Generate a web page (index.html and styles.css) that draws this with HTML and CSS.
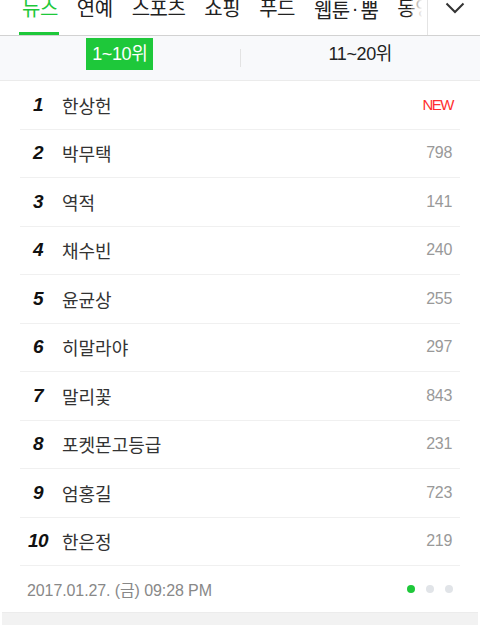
FILE: index.html
```html
<!DOCTYPE html>
<html lang="ko">
<head>
<meta charset="utf-8">
<title>실시간 급상승 검색어</title>
<link rel="stylesheet" href="styles.css">
</head>
<body>
<div class="nav">
  <div class="nav-scroll">
    <span class="nav-item active">뉴스</span>
    <span class="nav-item">연예</span>
    <span class="nav-item">스포츠</span>
    <span class="nav-item">쇼핑</span>
    <span class="nav-item">푸드</span>
    <span class="nav-item">웹툰<span class="mid">·</span>뿜</span>
    <span class="nav-item">동영상</span>
    <div class="nav-fade"></div>
  </div>
  <div class="nav-more">
    <svg width="20" height="12" viewBox="0 0 20 12"><path d="M1.5 1.5 L10 10 L18.5 1.5" fill="none" stroke="#333" stroke-width="2"/></svg>
  </div>
</div>
<div class="tabs">
  <div class="tab"><span class="tab-label on">1~10위</span></div>
  <div class="tab-sep"></div>
  <div class="tab"><span class="tab-label">11~20위</span></div>
</div>
<ul class="rank">
  <li class="row"><span class="num">1</span><span class="name">한상헌</span><span class="cnt new">NEW</span></li>
  <li class="row"><span class="num">2</span><span class="name">박무택</span><span class="cnt">798</span></li>
  <li class="row"><span class="num">3</span><span class="name">역적</span><span class="cnt">141</span></li>
  <li class="row"><span class="num">4</span><span class="name">채수빈</span><span class="cnt">240</span></li>
  <li class="row"><span class="num">5</span><span class="name">윤균상</span><span class="cnt">255</span></li>
  <li class="row"><span class="num">6</span><span class="name">히말라야</span><span class="cnt">297</span></li>
  <li class="row"><span class="num">7</span><span class="name">말리꽃</span><span class="cnt">843</span></li>
  <li class="row"><span class="num">8</span><span class="name">포켓몬고등급</span><span class="cnt">231</span></li>
  <li class="row"><span class="num">9</span><span class="name">엄홍길</span><span class="cnt">723</span></li>
  <li class="row"><span class="num">10</span><span class="name">한은정</span><span class="cnt">219</span></li>
</ul>
<div class="footer">
  <span class="date">2017.01.27. (금) 09:28 PM</span>
  <div class="dots"><span class="dot on"></span><span class="dot"></span><span class="dot"></span></div>
</div>
<div class="bottom-bar"></div>
</body>
</html>
```
FILE: styles.css
```css
* { box-sizing: border-box; }
html, body { margin: 0; padding: 0; background: #fff; }
body {
  width: 480px;
  height: 631px;
  overflow: hidden;
  font-family: "Liberation Sans", "Noto Sans CJK KR", sans-serif;
  color: #333;
}
.nav {
  display: flex;
  height: 36px;
  border-bottom: 1px solid #d2d2d2;
  background: #fff;
}
.nav-scroll {
  position: relative;
  flex: 1;
  display: flex;
  gap: 15px;
  padding-left: 19px;
  overflow: hidden;
  white-space: nowrap;
}
.nav-item {
  flex: none;
  height: 39px;
  margin-top: -4px;
  padding: 0 1px 0 3px;
  font-family: "Noto Sans CJK KR", sans-serif;
  font-size: 20px;
  line-height: 24px;
  color: #222;
  letter-spacing: -0.5px;
}
.nav-item .mid {
  font-family: "Liberation Sans", sans-serif;
  letter-spacing: 0;
  padding: 0 2px;
  vertical-align: 3px;
}
.nav-item.active {
  color: #1ec83a;
  border-bottom: 3px solid #1ec83a;
}
.nav-fade {
  position: absolute;
  right: 0;
  top: 0;
  width: 16px;
  height: 35px;
  background: linear-gradient(to right, rgba(255,255,255,0.3), #fff 70%);
}
.nav-more {
  flex: none;
  width: 53px;
  border-left: 1px solid #e4e4e4;
  display: flex;
  justify-content: center;
  padding-top: 2px;
  padding-left: 2px;
}
.tabs {
  display: flex;
  height: 45px;
  background: #f8f9fb;
  border-bottom: 1px solid #ebebeb;
}
.tab {
  flex: 1;
  display: flex;
  justify-content: center;
  padding-top: 2px;
}
.tab-sep {
  width: 1px;
  height: 18px;
  margin-top: 13px;
  background: #e3e3e3;
}
.tab-label {
  height: 32px;
  line-height: 32px;
  padding: 0 6px;
  font-size: 18px;
  letter-spacing: -0.4px;
  color: #222;
}
.tab-label.on {
  background: #1ec83a;
  color: #fff;
}
.rank {
  list-style: none;
  margin: 0 20px;
  padding: 0;
}
.row {
  display: flex;
  align-items: center;
  height: 48.5px;
  border-bottom: 1px solid #f0f0f0;
}
.num {
  width: 36px;
  text-align: center;
  font-size: 19px;
  font-weight: bold;
  font-style: italic;
  color: #111;
  letter-spacing: -0.5px;
}
.name {
  flex: 1;
  margin-left: 6px;
  font-family: "Noto Sans CJK KR", sans-serif;
  font-size: 18px;
  color: #333;
}
.cnt {
  padding-right: 8px;
  font-size: 16px;
  color: #999;
  letter-spacing: -0.3px;
}
.cnt.new {
  color: #ff2f2f;
  font-size: 15px;
  letter-spacing: -1.5px;
  padding-right: 7px;
}
.footer {
  display: flex;
  align-items: center;
  justify-content: space-between;
  height: 46px;
  padding: 0 27px 0 27px;
}
.date {
  font-size: 16px;
  color: #888;
  letter-spacing: -0.1px;
}
.dots {
  display: flex;
  gap: 11px;
}
.dot {
  width: 8px;
  height: 8px;
  border-radius: 50%;
  background: #e1e4e8;
}
.dot.on { background: #1ec83a; }
.bottom-bar {
  margin: 0 2px;
  height: 13px;
  background: #f2f2f2;
  border-top: 1px solid #ececec;
}
```
